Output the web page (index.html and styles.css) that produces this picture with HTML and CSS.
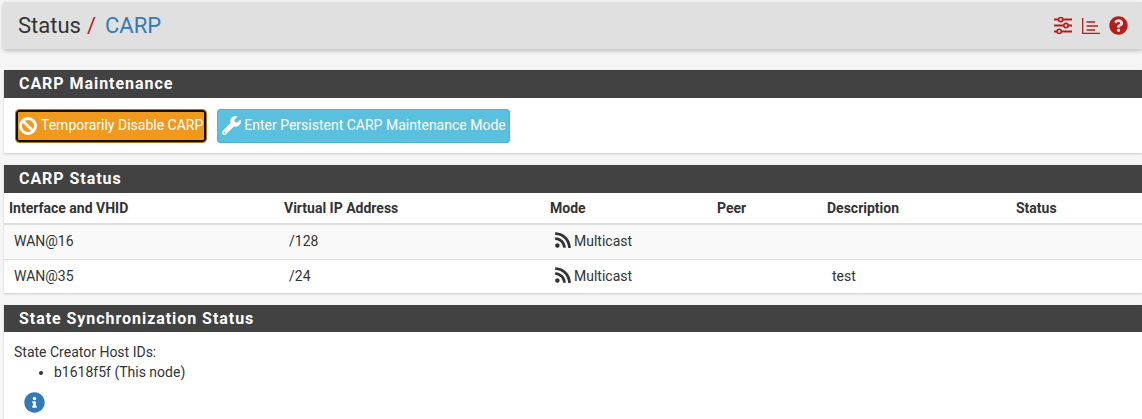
FILE: index.html
```html
<!DOCTYPE html>
<html lang="en">
<head>
<meta charset="utf-8">
<title>Status / CARP</title>
<link rel="stylesheet" href="styles.css">
</head>
<body>
<header class="pagebar">
  <h1 class="crumbs"><span>Status</span><span class="sep">/</span><a class="crumb-link">CARP</a></h1>
  <div class="bar-icons">
    <svg class="ico-sliders" viewBox="0 0 18 17" aria-hidden="true"><path d="M0 2.5h18M0 8.5h18M0 14.5h18" stroke="currentColor" stroke-width="2" fill="none"/><circle cx="6.7" cy="2.5" r="2.1" fill="#e0e0e0" stroke="currentColor" stroke-width="1.6"/><circle cx="12" cy="8.5" r="2.1" fill="#e0e0e0" stroke="currentColor" stroke-width="1.6"/><circle cx="5.2" cy="14.5" r="2.1" fill="#e0e0e0" stroke="currentColor" stroke-width="1.6"/></svg>
    <svg class="ico-log" viewBox="0 0 18 16" aria-hidden="true"><path d="M.7 0v15.3H18M4.5 4h8.5M4.5 8h11.5M4.5 12h8.5" stroke="currentColor" stroke-width="1.3" fill="none"/></svg>
    <svg class="ico-help" viewBox="0 0 512 512" aria-hidden="true"><path fill="currentColor" d="M504 256c0 136.997-111.043 248-248 248S8 392.997 8 256C8 119.083 119.043 8 256 8s248 111.083 248 248zM262.655 90c-54.497 0-89.255 22.957-116.549 63.758-3.536 5.286-2.353 12.415 2.715 16.258l34.699 26.31c5.205 3.947 12.621 3.008 16.665-2.122 17.864-22.658 30.113-35.797 57.303-35.797 20.429 0 45.698 13.148 45.698 32.958 0 14.976-12.363 22.667-32.534 33.976C247.128 238.528 216 254.941 216 296v4c0 6.627 5.373 12 12 12h56c6.627 0 12-5.373 12-12v-1.333c0-28.462 83.186-29.647 83.186-106.667 0-58.002-60.165-102-116.531-102zM256 338c-25.365 0-46 20.635-46 46 0 25.364 20.635 46 46 46s46-20.636 46-46c0-25.365-20.635-46-46-46z"/></svg>
  </div>
</header>

<section class="panel">
  <h2 class="panel-title">CARP Maintenance</h2>
  <div class="panel-body actions">
    <button class="btn btn-warn" type="button">
      <svg class="btn-ban" viewBox="0 0 20 20" aria-hidden="true"><circle cx="10" cy="10" r="8.4" fill="none" stroke="currentColor" stroke-width="3.2"/><path d="M4.2 4.2l11.6 11.6" stroke="currentColor" stroke-width="3.2"/></svg>
      Temporarily Disable CARP
    </button>
    <button class="btn btn-info" type="button">
      <svg class="btn-wrench" viewBox="0 0 512 512" aria-hidden="true"><path fill="currentColor" d="M507.73 109.1c-2.24-9.03-13.54-12.09-20.12-5.51l-74.36 74.36-67.88-11.31-11.31-67.88 74.36-74.36c6.62-6.62 3.43-17.9-5.66-20.16-47.38-11.74-99.55.91-136.58 37.93-39.64 39.64-50.55 97.1-34.05 147.2L18.74 402.76c-24.99 24.99-24.99 65.51 0 90.5 24.99 24.99 65.51 24.99 90.5 0l213.21-213.21c50.12 16.71 107.47 5.68 147.37-34.22 37.07-37.07 49.7-89.32 37.91-136.73zM64 472c-13.25 0-24-10.75-24-24 0-13.26 10.75-24 24-24s24 10.74 24 24c0 13.25-10.75 24-24 24z"/></svg>
      Enter Persistent CARP Maintenance Mode
    </button>
  </div>
</section>

<section class="panel">
  <h2 class="panel-title">CARP Status</h2>
  <table class="status-table">
    <colgroup><col class="c1"><col class="c2"><col class="c3"><col class="c4"><col class="c5"><col></colgroup>
    <thead>
      <tr><th>Interface and VHID</th><th>Virtual IP Address</th><th>Mode</th><th>Peer</th><th>Description</th><th>Status</th></tr>
    </thead>
    <tbody>
      <tr class="odd">
        <td>WAN@16</td><td>/128</td>
        <td><svg class="ico-rss" viewBox="0 0 448 512" aria-hidden="true"><path fill="currentColor" d="M128.081 415.959c0 35.369-28.672 64.041-64.041 64.041S0 451.328 0 415.959s28.672-64.041 64.041-64.041 64.04 28.673 64.04 64.041zm175.66 47.25c-8.354-154.6-132.185-278.587-286.95-286.95C7.656 175.765 0 183.105 0 192.253v48.069c0 8.415 6.49 15.472 14.887 16.018 111.832 7.284 201.473 96.702 208.772 208.772.547 8.397 7.604 14.887 16.018 14.887h48.069c9.149.001 16.489-7.655 15.995-16.79zm144.249.288C439.596 229.677 251.465 40.445 16.503 32.01 7.473 31.686 0 38.981 0 48.016v48.068c0 8.625 6.835 15.645 15.453 15.999 191.179 7.839 344.627 161.316 352.465 352.465.353 8.618 7.373 15.453 15.999 15.453h48.068c9.034-.001 16.329-7.474 16.005-16.504z"/></svg>Multicast</td>
        <td></td><td></td><td></td>
      </tr>
      <tr>
        <td>WAN@35</td><td>/24</td>
        <td><svg class="ico-rss" viewBox="0 0 448 512" aria-hidden="true"><path fill="currentColor" d="M128.081 415.959c0 35.369-28.672 64.041-64.041 64.041S0 451.328 0 415.959s28.672-64.041 64.041-64.041 64.04 28.673 64.04 64.041zm175.66 47.25c-8.354-154.6-132.185-278.587-286.95-286.95C7.656 175.765 0 183.105 0 192.253v48.069c0 8.415 6.49 15.472 14.887 16.018 111.832 7.284 201.473 96.702 208.772 208.772.547 8.397 7.604 14.887 16.018 14.887h48.069c9.149.001 16.489-7.655 15.995-16.79zm144.249.288C439.596 229.677 251.465 40.445 16.503 32.01 7.473 31.686 0 38.981 0 48.016v48.068c0 8.625 6.835 15.645 15.453 15.999 191.179 7.839 344.627 161.316 352.465 352.465.353 8.618 7.373 15.453 15.999 15.453h48.068c9.034-.001 16.329-7.474 16.005-16.504z"/></svg>Multicast</td>
        <td></td><td>test</td><td></td>
      </tr>
    </tbody>
  </table>
</section>

<section class="panel panel-sync">
  <h2 class="panel-title">State Synchronization Status</h2>
  <div class="panel-body sync">
    <div>State Creator Host IDs:</div>
    <ul class="hosts"><li>b1618f5f (This node)</li></ul>
    <svg class="ico-info" viewBox="0 0 512 512" aria-hidden="true"><path fill="currentColor" d="M256 8C119.043 8 8 119.083 8 256c0 136.997 111.043 248 248 248s248-111.003 248-248C504 119.083 392.957 8 256 8zm0 110c23.196 0 42 18.804 42 42s-18.804 42-42 42-42-18.804-42-42 18.804-42 42-42zm56 254c0 6.627-5.373 12-12 12h-88c-6.627 0-12-5.373-12-12v-24c0-6.627 5.373-12 12-12h12v-64h-12c-6.627 0-12-5.373-12-12v-24c0-6.627 5.373-12 12-12h64c6.627 0 12 5.373 12 12v100h12c6.627 0 12 5.373 12 12v24z"/></svg>
  </div>
</section>
</body>
</html>
```
FILE: styles.css
```css
html, body { height: 100%; }
body {
  margin: 0;
  padding: 2px 0 0 4px;
  box-sizing: border-box;
  overflow: hidden;
  background: #f5f5f5;
  color: #333;
  font-family: Roboto, "Liberation Sans", sans-serif;
  font-size: 14px;
  line-height: 20px;
}
.pagebar {
  display: flex;
  align-items: center;
  justify-content: space-between;
  height: 47px;
  margin: 0 0 21px -1px;
  padding: 0 14px 0 15px;
  background: #e0e0e0;
  border-radius: 3px 0 0 3px;
  box-shadow: 0 2px 4px rgba(0,0,0,.22);
}
.crumbs {
  margin: 0;
  font-size: 22px;
  font-weight: 400;
  line-height: 24px;
  color: #333;
}
.sep { color: #b71c1c; margin: 0 9px 0 6px; }
.crumb-link { color: #337ab7; }
.bar-icons { display: flex; align-items: center; gap: 9px; color: #b71c1c; }
.ico-sliders { width: 18px; height: 17px; display: block; margin-right: 1px; }
.ico-log { width: 18px; height: 16px; display: block; }
.ico-help { width: 19px; height: 19px; display: block; }
.panel {
  background: #fff;
  margin-bottom: 12px;
  box-shadow: 0 1px 2px rgba(0,0,0,.18);
}
.panel-title {
  margin: 0;
  height: 28px;
  padding: 0 15px;
  background: #424242;
  color: #fff;
  font-size: 16px;
  font-weight: 700;
  line-height: 28px;
  letter-spacing: .95px;
}
.panel-sync .panel-title { height: 27px; line-height: 27px; }
.panel-body { padding: 10px; }
.actions { display: flex; gap: 11px; height: 55px; box-sizing: border-box; padding: 11px 10px; align-items: flex-start; }
.btn {
  display: inline-flex;
  align-items: center;
  height: 34px;
  padding: 0 3px 2px 4px;
  border: 1px solid transparent;
  border-radius: 3px;
  color: #fff;
  font: 14px/20px Roboto, "Liberation Sans", sans-serif;
  white-space: nowrap;
}
.btn-warn {
  background: #f0991f;
  border: 2px solid #111;
  outline: 1px solid #b5761a;
  outline-offset: 0;
  margin: 1px 0 0 2px;
  height: 32px;
  padding: 0 1px 2px;
}
.btn-info { background: #5bc0de; border-color: #46b8da; }
.btn-ban { width: 18px; height: 18px; margin: 2px 4px 0 0; }
.btn-wrench { width: 19px; height: 19px; margin-right: 3px; }
.status-table {
  width: 100%;
  border-collapse: collapse;
  table-layout: fixed;
  background: #fff;
}
.c1 { width: 275px; }
.c2 { width: 266px; }
.c3 { width: 167px; }
.c4 { width: 110px; }
.c5 { width: 189px; }
.status-table th {
  height: 30px;
  padding: 0 5px;
  text-align: left;
  font-weight: 700;
  border-bottom: 2px solid #ddd;
}
.status-table td {
  height: 32px;
  padding: 0 10px 2px;
  border-bottom: 1px solid #ddd;
}
.odd td { background: #f9f9f9; }
.status-table tr:last-child td { border-bottom: 0; height: 31px; padding-bottom: 2px; }
.ico-rss { width: 16px; height: 18px; margin-right: 3px; vertical-align: -3px; }
.sync { padding: 10px; }
.hosts { margin: 0; padding-left: 40px; }
.ico-info { display: block; width: 21px; height: 21px; margin: 10px 0 0 10px; color: #337ab7; }
```
